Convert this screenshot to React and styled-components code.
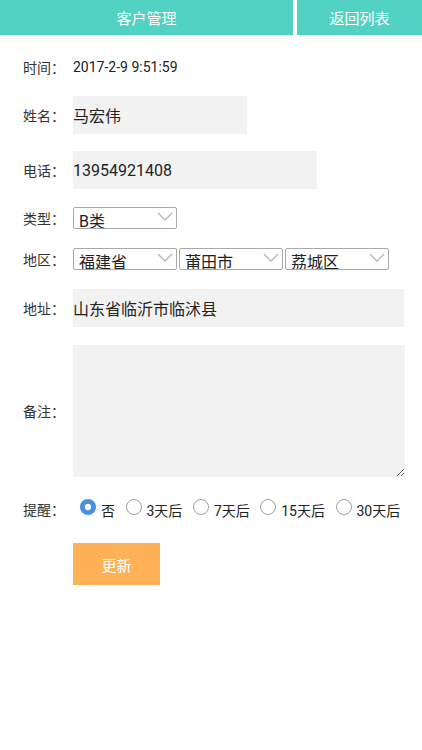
import styled, { createGlobalStyle } from 'styled-components';

const GlobalStyle = createGlobalStyle`
body {
  margin: 0;
  background: #fff;
  font-family: Roboto, "Noto Sans CJK SC", sans-serif;
  color: #222;
}
`

const reminders = ['否', '3天后', '7天后', '15天后', '30天后'];

function Chevron() {
    return (
        <ArrowIcon width="16" height="9" viewBox="0 0 16 9">
            <polyline points="1,1 8,8 15,1" fill="none" stroke="#b4b4b4" strokeWidth="1.3" />
        </ArrowIcon>
    )
}

function Dropdown({ value, options }) {
    return (
        <SelectWrap>
            <Select defaultValue={value}>
                {options.map(o => <option key={o}>{o}</option>)}
            </Select>
            <Chevron />
        </SelectWrap>
    )
}

export default function App() {
    return (
        <>
            <GlobalStyle />
            <Header>
                <HeaderButton wide>客户管理</HeaderButton>
                <HeaderButton>返回列表</HeaderButton>
            </Header>
            <Form>
                <Row space={22}>
                    <Label>时间：</Label>
                    <Value>2017-2-9 9:51:59</Value>
                </Row>
                <Row space={19}>
                    <Label>姓名：</Label>
                    <TextInput width={174} defaultValue="马宏伟" />
                </Row>
                <Row space={17}>
                    <Label>电话：</Label>
                    <TextInput width={244} defaultValue="13954921408" />
                </Row>
                <Row space={18}>
                    <Label>类型：</Label>
                    <Dropdown value="B类" options={['A类', 'B类', 'C类']} />
                </Row>
                <Row space={19}>
                    <Label>地区：</Label>
                    <SelectGroup>
                        <Dropdown value="福建省" options={['福建省', '山东省']} />
                        <Dropdown value="莆田市" options={['莆田市', '福州市']} />
                        <Dropdown value="荔城区" options={['荔城区', '城厢区']} />
                    </SelectGroup>
                </Row>
                <Row space={19}>
                    <Label>地址：</Label>
                    <TextInput width={331} defaultValue="山东省临沂市临沭县" />
                </Row>
                <Row space={18}>
                    <Label>备注：</Label>
                    <NoteArea />
                </Row>
                <Row space={22}>
                    <Label>提醒：</Label>
                    <RadioGroup>
                        {reminders.map((r, i) => (
                            <RadioOption key={r}>
                                <Radio type="radio" name="remind" defaultChecked={i === 0} />
                                <RadioText>{r}</RadioText>
                            </RadioOption>
                        ))}
                    </RadioGroup>
                </Row>
                <Row space={24}>
                    <Label />
                    <SubmitButton>更新</SubmitButton>
                </Row>
            </Form>
        </>
    )
}

const Header = styled.div`
display: flex;
gap: 4px;
height: 35px;
`
const HeaderButton = styled.div`
${p => p.wide ? 'width: 293px;' : 'flex: 1;'}
display: flex;
align-items: center;
justify-content: center;
background: #51d2c2;
color: #fff;
font-size: 15px;
`
const Form = styled.div`
display: flex;
flex-direction: column;
padding-left: 23px;
`
const Row = styled.div`
display: flex;
align-items: center;
margin-top: ${p => p.space}px;
`
const Label = styled.span`
width: 50px;
flex-shrink: 0;
font-size: 14px;
color: #333;
`
const Value = styled.span`
font-size: 14px;
line-height: 20px;
color: #222;
`
const TextInput = styled.input`
box-sizing: border-box;
width: ${p => p.width}px;
height: 38px;
border: none;
outline: none;
padding: 0;
background: #f2f2f2;
font-family: Roboto, "Noto Sans CJK SC", sans-serif;
font-size: 16px;
color: #222;
`
const NoteArea = styled.textarea`
box-sizing: border-box;
width: 332px;
height: 132px;
border: none;
outline: none;
padding: 0;
background: #f2f2f2;
`
const SelectGroup = styled.div`
display: flex;
gap: 2px;
`
const SelectWrap = styled.div`
position: relative;
width: 104px;
height: 22px;
`
const Select = styled.select`
appearance: none;
box-sizing: border-box;
width: 100%;
height: 22px;
border: 1px solid #a9a9a9;
border-radius: 2px;
background: #fff;
padding: 4px 22px 0 5px;
font-family: Roboto, "Noto Sans CJK SC", sans-serif;
font-size: 16px;
line-height: 20px;
color: #222;
overflow: hidden;
outline: none;
`
const ArrowIcon = styled.svg`
position: absolute;
right: 4px;
top: 5px;
pointer-events: none;
`
const RadioGroup = styled.div`
display: flex;
padding-left: 7px;
`
const RadioOption = styled.label`
display: flex;
align-items: flex-start;
gap: 5px;
margin-right: 10.5px;
`
const Radio = styled.input`
appearance: none;
margin: 0;
width: 16px;
height: 16px;
border-radius: 50%;
border: 1px solid #a0a0a0;
background: #fff;
&:checked {
  border: none;
  background: radial-gradient(circle, #fff 0 3px, #4a90e2 3.6px);
}
`
const RadioText = styled.span`
font-size: 14px;
line-height: 16px;
margin-top: 4px;
color: #222;
`
const SubmitButton = styled.button`
width: 87px;
height: 42px;
border: none;
background: #ffb157;
color: #fff;
font-family: Roboto, "Noto Sans CJK SC", sans-serif;
font-size: 15px;
`
